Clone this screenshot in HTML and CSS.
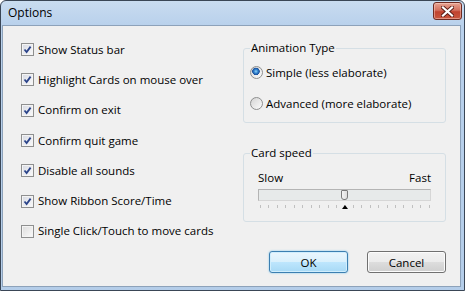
FILE: index.html
```html
<!DOCTYPE html>
<html lang="en">
<head>
    <meta charset="UTF-8">
    <title>Options</title>
    <link rel="stylesheet" href="styles.css">
</head>
<body>
    <div class="window">
        <div class="titlebar">
            <span class="title">Options</span>
            <span class="close">
                <svg width="13" height="11" viewBox="0 0 13 11">
                    <path d="M2 1.5 L11 9.5 M11 1.5 L2 9.5" stroke="#5b1d16" stroke-width="4" stroke-linecap="square"/>
                    <path d="M2 1.5 L11 9.5 M11 1.5 L2 9.5" stroke="#fff" stroke-width="2.2" stroke-linecap="square"/>
                </svg>
            </span>
        </div>
        <div class="client">
            <div class="main">
                <div class="checks">
                    <label class="check"><span class="box on"></span>Show Status bar</label>
                    <label class="check"><span class="box on"></span>Highlight Cards on mouse over</label>
                    <label class="check"><span class="box on"></span>Confirm on exit</label>
                    <label class="check"><span class="box on"></span>Confirm quit game</label>
                    <label class="check"><span class="box on"></span>Disable all sounds</label>
                    <label class="check"><span class="box on"></span>Show Ribbon Score/Time</label>
                    <label class="check"><span class="box"></span>Single Click/Touch to move cards</label>
                </div>
                <div class="groups">
                    <fieldset class="group anim">
                        <legend>Animation Type</legend>
                        <label class="radio"><span class="dot on"></span>Simple (less elaborate)</label>
                        <label class="radio"><span class="dot"></span>Advanced (more elaborate)</label>
                    </fieldset>
                    <fieldset class="group speed">
                        <legend>Card speed</legend>
                        <div class="slider">
                            <div class="ends"><span>Slow</span><span>Fast</span></div>
                            <div class="track"><span class="thumb" style="left: 50%"></span></div>
                            <div class="ticks">
                                <i></i><i></i><i></i><i></i><i></i><i></i><i></i><i></i><i></i><i></i><i></i>
                                <i></i><i></i><i></i><i></i><i></i><i></i><i></i><i></i><i></i><i></i>
                                <span class="pointer" style="left: 50%"></span>
                            </div>
                        </div>
                    </fieldset>
                </div>
            </div>
            <div class="actions">
                <button class="btn default">OK</button>
                <button class="btn">Cancel</button>
            </div>
        </div>
    </div>
</body>
</html>
```

FILE: styles.css
```css
body {
    margin: 0;
    background-color: #fff;
    font-family: "Open Sans", "Noto Sans", sans-serif;
    font-size: 11.5px;
    color: #000;
}
.window {
    width: 465px;
    height: 291px;
    box-sizing: border-box;
    border: 1px solid #3a4656;
    border-radius: 6px 6px 0 0;
    padding: 0 3px 3px 1px;
    background: linear-gradient(#c9dcf0, #b9d1ec 24px, #b4cde9);
    display: flex;
    flex-direction: column;
}
.titlebar {
    height: 24px;
    display: flex;
    align-items: center;
    justify-content: space-between;
    padding-left: 6px;
}
.title {
    font-size: 12px;
    color: #000;
    margin-top: -2px;
}
.close {
    width: 29px;
    height: 18px;
    margin-top: -4px;
    margin-right: -1px;
    box-sizing: border-box;
    border: 1px solid #6e2b22;
    border-radius: 3px;
    background: linear-gradient(#e8a493, #d3705e 45%, #c1432f 55%, #c9573f);
    box-shadow: inset 0 0 0 1px rgba(255, 220, 210, 0.45);
    display: flex;
    align-items: center;
    justify-content: center;
}
.client {
    flex: 1;
    background-color: #f0f0f0;
    border: 1px solid #8da2ba;
    padding: 0 14px 13px 18px;
    display: flex;
    flex-direction: column;
}
.main {
    display: flex;
    justify-content: space-between;
    align-items: flex-start;
}
.checks {
    padding-top: 8px;
    display: flex;
    flex-direction: column;
}
.check {
    height: 30.3px;
    display: flex;
    align-items: center;
    gap: 4px;
}
.box {
    width: 13px;
    height: 13px;
    box-sizing: border-box;
    border: 1px solid #8e8f8f;
    background: linear-gradient(135deg, #dcdcdc, #fbfbfb);
    box-shadow: inset 0 0 0 1px #f4f4f4;
    margin-top: 1px;
}
.box.on {
    background:
        url("data:image/svg+xml,%3Csvg xmlns='http://www.w3.org/2000/svg' width='11' height='11'%3E%3Cpath d='M2.5 5.5 L4.6 8 L8.6 2.6' fill='none' stroke='%232a4389' stroke-width='1.8'/%3E%3C/svg%3E") center no-repeat,
        linear-gradient(135deg, #d6d9e2, #fbfbfb);
}
.groups {
    width: 203px;
    margin-top: 14px;
}
.group {
    margin: 0;
    border: 1px solid #d5dfe5;
    border-radius: 3px;
    padding: 0 6px;
}
.group legend {
    padding: 0 1px;
    line-height: 16px;
}
.anim {
    padding-top: 6px;
    padding-bottom: 9px;
}
.radio {
    height: 20px;
    display: flex;
    align-items: center;
    gap: 3px;
}
.radio + .radio {
    margin-top: 11px;
}
.dot {
    width: 13px;
    height: 13px;
    box-sizing: border-box;
    border-radius: 50%;
    border: 1px solid #8e8f8f;
    background: linear-gradient(135deg, #d4d4d4, #fcfcfc);
    margin-top: 1px;
}
.dot.on {
    background:
        radial-gradient(circle at 45% 40%, #8ed1f8 0, #2f80cc 2px, #1c4f9a 3.5px, transparent 4px),
        linear-gradient(135deg, #d4d4d4, #fcfcfc);
}
.speed {
    margin-top: 22px;
    padding-top: 9px;
    padding-bottom: 12px;
}
.slider {
    margin: 0 8px 0 8px;
}
.ends {
    display: flex;
    justify-content: space-between;
    line-height: 16px;
}
.track {
    position: relative;
    height: 10px;
    margin-top: 3px;
    border: 1px solid #d6d6d6;
    border-top-color: #b4b4b4;
    border-left-color: #b4b4b4;
    background-color: #e7eaea;
}
.thumb {
    position: absolute;
    top: 0;
    width: 7px;
    height: 10px;
    margin-left: -4px;
    box-sizing: border-box;
    border: 1px solid #7a7a7a;
    border-radius: 1px 1px 3px 3px;
    background: linear-gradient(90deg, #f4f4f4, #dcdcdc);
}
.ticks {
    position: relative;
    display: flex;
    justify-content: space-between;
    margin: 3px 1px 0 2px;
    height: 5px;
}
.ticks i {
    width: 1px;
    height: 3px;
    margin-top: 1px;
    background-color: #c0c0c0;
}
.pointer {
    position: absolute;
    top: 1px;
    margin-left: -3px;
    width: 0;
    height: 0;
    border-left: 3px solid transparent;
    border-right: 3px solid transparent;
    border-bottom: 4px solid #000;
}
.actions {
    margin-top: auto;
    display: flex;
    justify-content: flex-end;
    gap: 19px;
}
.btn {
    width: 79px;
    height: 22px;
    font-family: inherit;
    font-size: 11.5px;
    color: #000;
    border: 1px solid #707070;
    border-radius: 3px;
    background: linear-gradient(#f2f2f2, #ebebeb 50%, #dddddd 50%, #cfcfcf);
    box-shadow: inset 0 0 0 1px #fcfcfc;
    padding: 0;
}
.btn.default {
    border-color: #3c7fb1;
    background: linear-gradient(#eaf6fd, #d9f0fc 50%, #bee6fd 50%, #a7d9f5);
    box-shadow: inset 0 0 0 1px #d0eefd, 0 0 2px #6fc0ea;
}
```
